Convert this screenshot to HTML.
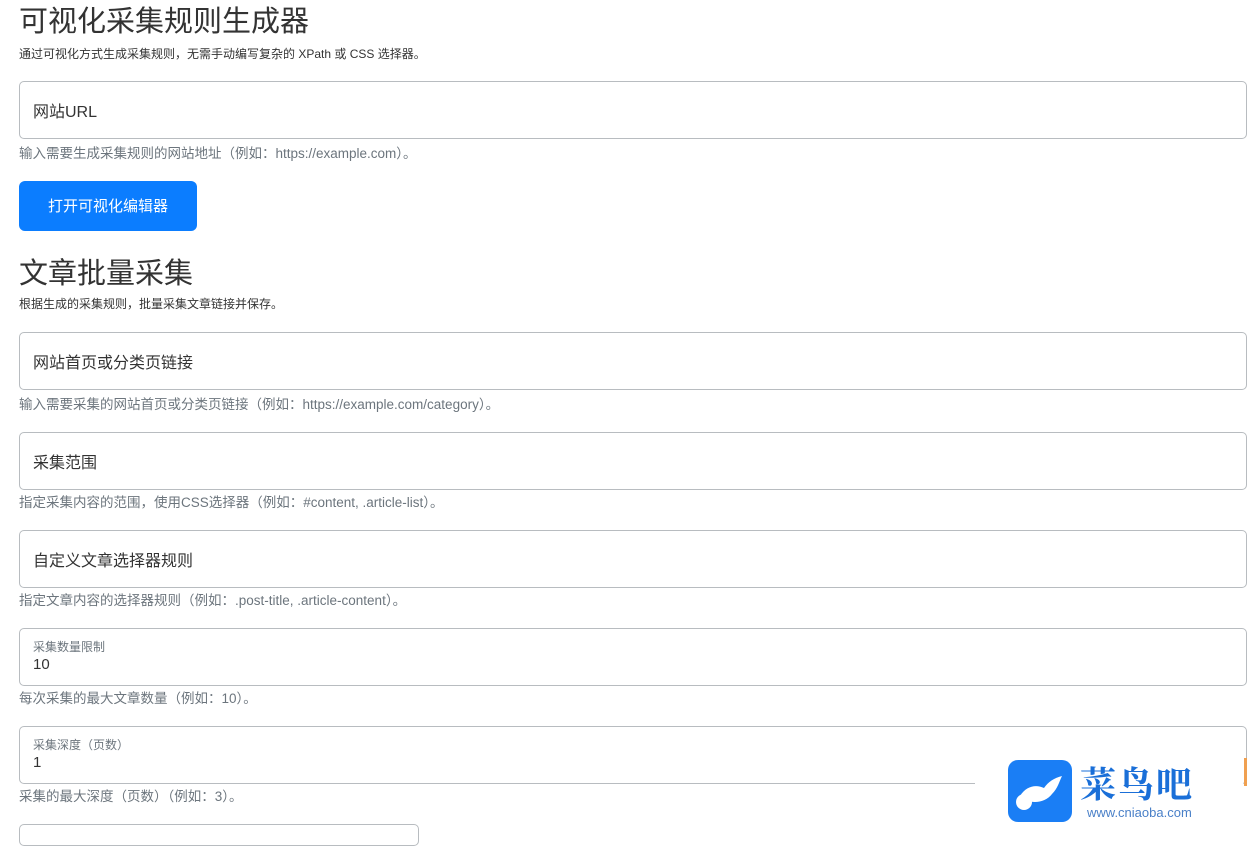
<!DOCTYPE html>
<html><head><meta charset="utf-8"><style>
body{margin:0;background:#fff;font-family:"Liberation Sans","Noto Sans CJK SC",sans-serif;color:#212529;width:1249px;height:833px;overflow:hidden;position:relative}
.a{position:absolute}
h1{position:absolute;margin:0;font-weight:400;font-size:29px;left:19px;line-height:36px;color:#333}
.sub{position:absolute;left:19px;font-size:12px;line-height:16px;color:#333}
.in{position:absolute;left:19px;width:1226px;height:56px;border:1px solid #b8bcc0;border-radius:5px;box-sizing:content-box}
.in span{position:absolute;left:13px;top:16px;font-size:16px;color:#333}
.in .l{top:9px;font-size:12px;color:#6c757d}
.in .v{top:27px;font-size:15px}
.h{position:absolute;left:19px;font-size:13.5px;color:#6c757d;line-height:18px}
</style></head><body>
<h1 style="top:4px">可视化采集规则生成器</h1>
<div class="sub" style="top:46px">通过可视化方式生成采集规则，无需手动编写复杂的 XPath 或 CSS 选择器。</div>
<div class="in" style="top:81px"><span>网站URL</span></div>
<div class="h" style="top:145px">输入需要生成采集规则的网站地址（例如：https://example.com）。</div>
<div class="a" style="left:19px;top:181px;width:178px;height:50px;background:#0b7dff;border-radius:6px;color:#fff;font-size:15px;line-height:52px;text-align:center">打开可视化编辑器</div>
<h1 style="top:256px">文章批量采集</h1>
<div class="sub" style="top:296px">根据生成的采集规则，批量采集文章链接并保存。</div>
<div class="in" style="top:332px"><span>网站首页或分类页链接</span></div>
<div class="h" style="top:396px">输入需要采集的网站首页或分类页链接（例如：https://example.com/category）。</div>
<div class="in" style="top:432px"><span>采集范围</span></div>
<div class="h" style="top:494px">指定采集内容的范围，使用CSS选择器（例如：#content, .article-list）。</div>
<div class="in" style="top:530px"><span>自定义文章选择器规则</span></div>
<div class="h" style="top:592px">指定文章内容的选择器规则（例如：.post-title, .article-content）。</div>
<div class="in" style="top:628px"><span class="l">采集数量限制</span><span class="v">10</span></div>
<div class="h" style="top:690px">每次采集的最大文章数量（例如：10）。</div>
<div class="in" style="top:726px"><span class="l">采集深度（页数）</span><span class="v">1</span></div>
<div class="h" style="top:788px">采集的最大深度（页数）（例如：3）。</div>
<div class="a" style="left:19px;top:824px;width:398px;height:20px;border:1px solid #b8bcc0;border-radius:5px"></div>
<div class="a" style="left:975px;top:730px;width:268px;height:103px;background:#fff"></div>
<div class="a" style="left:1244px;top:758px;width:3px;height:28px;background:#f0a050"></div>
<svg class="a" style="left:1008px;top:760px" width="64" height="62" viewBox="0 0 64 62"><rect width="64" height="62" rx="10" fill="#1a7ef5"/><path d="M12 36c6-10 16-12 24-8 4-6 10-10 18-12-3 6-4 12-10 18-6 8-18 10-26 6z" fill="#fff"/><circle cx="16" cy="42" r="8" fill="#fff"/></svg>
<div class="a" style="left:1080px;top:762px;font-size:36px;line-height:42px;color:#1a6fd8;font-family:'Noto Serif CJK SC',serif;font-weight:700;letter-spacing:2px">菜鸟吧</div>
<div class="a" style="left:1087px;top:805px;font-size:13px;color:#4a80c8">www.cniaoba.com</div>
</body></html>
